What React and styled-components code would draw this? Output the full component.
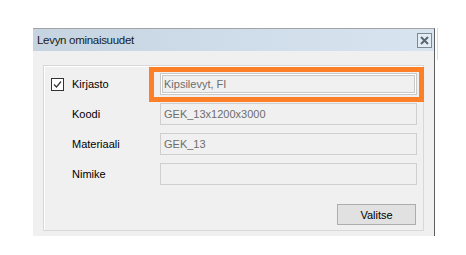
import styled, { createGlobalStyle } from "styled-components";

const GlobalStyle = createGlobalStyle`
  html, body {
    margin: 0;
    padding: 0;
    background: #ffffff;
  }
  body {
    font-family: "Liberation Sans", Arial, sans-serif;
    font-size: 11px;
  }
`;

const Page = styled.div`
  width: 466px;
  height: 255px;
  padding: 28px 0 0 33px;
  box-sizing: border-box;
  display: flex;
  align-items: flex-start;
`;

const Dialog = styled.div`
  width: 402px;
  display: flex;
  flex-direction: column;
  border-top: 1px solid #a3a3a3;
  border-right: 1px solid #5f5f5f;
  box-sizing: border-box;
`;

const BackEdge = styled.div`
  width: 1px;
  height: 32px;
  margin-left: 2px;
  background: #dcdcdc;
`;

const TitleBar = styled.div`
  height: 22px;
  display: flex;
  align-items: center;
  justify-content: space-between;
  padding: 0 2px 0 4px;
  background: linear-gradient(to right, #c6d4e1, #d8e5f1);
  color: #1a1a1a;
`;

const Title = styled.span`
  font-size: 11.5px;
  letter-spacing: -0.3px;
`;

const CloseButton = styled.div`
  width: 13px;
  height: 13px;
  border: 1px solid #7d8996;
  background: #e4ecf4;
  display: flex;
  align-items: center;
  justify-content: center;
`;

const Body = styled.div`
  background: #f0f0f0;
  padding: 14px 10px 5px 10px;
`;

const Group = styled.div`
  position: relative;
  border: 1px solid #d8d8d8;
  box-shadow: inset 1px 1px 0 #ffffff;
  padding: 7px 6px 5px 7px;
  display: flex;
  flex-direction: column;
  gap: 8px;
`;

const Row = styled.div`
  display: flex;
  align-items: center;
  height: 22px;
`;

const CheckSlot = styled.div`
  width: 21px;
  display: flex;
  align-items: center;
`;

const CheckBox = styled.div`
  width: 11px;
  height: 11px;
  border: 1px solid #333333;
  background: #ffffff;
  display: flex;
  align-items: center;
  justify-content: center;
`;

const Label = styled.span`
  width: 88px;
  color: #000000;
`;

const Field = styled.div`
  flex: 1;
  height: 22px;
  box-sizing: border-box;
  border: 1px solid ${(p) => (p.$focused ? "#c9c9c9" : "#cfcfcf")};
  box-shadow: ${(p) => (p.$focused ? "inset 0 0 0 1px #ffffff, inset 0 0 0 2px #c9c9c9" : "none")};
  background: #f0f0f0;
  color: #6d6d6d;
  padding: 0 3px;
  display: flex;
  align-items: center;
`;

const Footer = styled.div`
  display: flex;
  justify-content: flex-end;
  padding-top: 11px;
  padding-right: 1px;
`;

const Button = styled.div`
  width: 79px;
  height: 21px;
  box-sizing: border-box;
  border: 1px solid #adadad;
  background: #e1e1e1;
  display: flex;
  align-items: center;
  justify-content: center;
  color: #000000;
`;

const Highlight = styled.div`
  position: absolute;
  left: 105px;
  top: 1px;
  width: 275px;
  height: 35px;
  box-sizing: border-box;
  border: 5px solid #fd7f27;
  pointer-events: none;
`;

const rows = [
  { label: "Kirjasto", value: "Kipsilevyt, FI", check: true },
  { label: "Koodi", value: "GEK_13x1200x3000" },
  { label: "Materiaali", value: "GEK_13" },
  { label: "Nimike", value: "" },
];

export default function App() {
  return (
    <>
      <GlobalStyle />
      <Page>
        <Dialog>
          <TitleBar>
            <Title>Levyn ominaisuudet</Title>
            <CloseButton>
              <svg width="9" height="9" viewBox="0 0 9 9">
                <path d="M1 1 L8 8 M8 1 L1 8" stroke="#5a6775" strokeWidth="2" />
              </svg>
            </CloseButton>
          </TitleBar>
          <Body>
            <Group>
              {rows.map((r, i) => (
                <Row key={r.label}>
                  <CheckSlot>
                    {r.check && (
                      <CheckBox>
                        <svg width="9" height="9" viewBox="0 0 9 9">
                          <path d="M1 4.5 L3.5 7 L8 1.5" stroke="#333" strokeWidth="1.2" fill="none" />
                        </svg>
                      </CheckBox>
                    )}
                  </CheckSlot>
                  <Label>{r.label}</Label>
                  <Field $focused={i === 0}>{r.value}</Field>
                </Row>
              ))}
              <Footer>
                <Button>Valitse</Button>
              </Footer>
              <Highlight />
            </Group>
          </Body>
        </Dialog>
        <BackEdge />
      </Page>
    </>
  );
}
